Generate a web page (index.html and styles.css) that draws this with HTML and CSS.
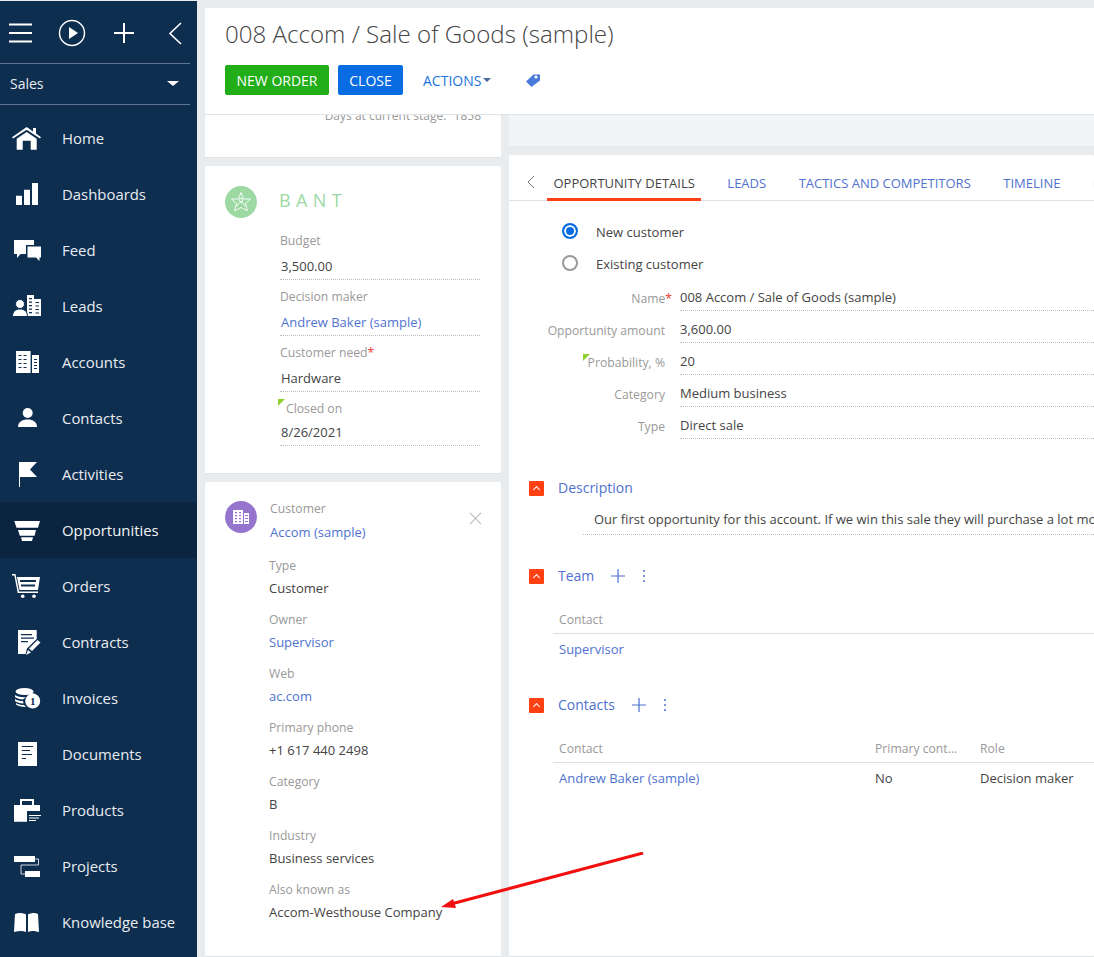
FILE: index.html
```html
<!DOCTYPE html>
<html lang="en">
<head>
    <meta charset="UTF-8">
    <title>008 Accom / Sale of Goods (sample)</title>
    <link rel="stylesheet" href="styles.css">
</head>
<body>
<div class="page">
    <aside class="sidebar">
        <div class="tools">
            <svg class="tools-icon" width="190" height="64" viewBox="0 0 190 64" fill="none" stroke="#fff">
                <path d="M9 24.5H32M9 33H32M9 41.5H32" stroke-width="2"/>
                <circle cx="72" cy="33" r="12.5" stroke-width="1.4"/>
                <path d="M69 27V39L78 33Z" fill="#fff" stroke="none"/>
                <path d="M114 33H134M124 23V43" stroke-width="2"/>
                <path d="M181 23L170 33.5L181 44" stroke-width="1.6"/>
            </svg>
        </div>
        <div class="workplace">
            <span>Sales</span>
            <i class="caret-white"></i>
        </div>
        <nav class="nav">
            <a class="nav-item">
                <svg viewBox="0 0 32 32"><path d="M15.7 4L22 8.5V5H25V10.6L30 14.3L29 15.6L15.7 6.8L2 15.6L1 14.3Z"/><path d="M5.7 15.7L15.7 9L25.7 15.7V26.7H19.7V17.7H11.7V26.7H5.7Z"/></svg>
                Home
            </a>
            <a class="nav-item">
                <svg viewBox="0 0 32 32"><path d="M5 16.7H11V26H5ZM13 10.7H19V26H13ZM21 4H27V26H21Z"/></svg>
                Dashboards
            </a>
            <a class="nav-item">
                <svg viewBox="0 0 32 32"><path d="M3 5H23V10H15V19H9.5L6 23V19H3Z"/><path d="M16.5 11.5H30V22.5H28.5V26L25 22.5H16.5Z"/></svg>
                Feed
            </a>
            <a class="nav-item">
                <svg viewBox="0 0 32 32"><path d="M16 4H23V8H30V25H16Z"/><path class="hole" d="M18 7H21V8.2H18ZM18 10.5H21V11.7H18ZM18 14H21V15.2H18ZM18 17.5H21V18.7H18ZM18 21H21V22.2H18ZM24.5 11H28V12H24.5ZM24.5 14.5H28V15.5H24.5ZM24.5 18H28V19H24.5ZM24.5 21.5H28V22.5H24.5Z"/><circle class="person" cx="9" cy="13" r="4.5"/><path class="person" d="M1.5 25.5C1.5 20 5 18 9 18C13 18 16.5 20 16.5 25.5Z"/></svg>
                Leads
            </a>
            <a class="nav-item">
                <svg viewBox="0 0 32 32"><path d="M5 4H19.6V26H5ZM21 8H28V26H21Z"/><path class="hole" d="M7.5 8H10.5V9H7.5ZM12.5 8H15.5V9H12.5ZM7.5 12H10.5V13H7.5ZM12.5 12H15.5V13H12.5ZM7.5 16H10.5V17H7.5ZM12.5 16H15.5V17H12.5ZM7.5 20H10.5V21H7.5ZM12.5 20H15.5V21H12.5ZM23 12H26V13H23ZM23 15H26V16H23ZM23 18H26V19H23ZM23 21H26V22H23Z"/></svg>
                Accounts
            </a>
            <a class="nav-item">
                <svg viewBox="0 0 32 32"><circle cx="16.7" cy="10" r="5"/><path d="M7 24C7 19 11 16.5 16.7 16.5C22 16.5 26 19 26 24Z"/></svg>
                Contacts
            </a>
            <a class="nav-item">
                <svg viewBox="0 0 32 32"><path d="M8 3H26L19 10.5L26 18H9V28H8Z"/></svg>
                Activities
            </a>
            <a class="nav-item active">
                <svg viewBox="0 0 32 32"><path d="M3.3 6H29L27 12.7H5.5ZM7 15H25L23.6 20.7H8.8ZM10 22.3H22L21 26H11Z"/></svg>
                Opportunities
            </a>
            <a class="nav-item">
                <svg viewBox="0 0 32 32"><path d="M1 3H4.5L8 20.5H27V22H6.7L3.4 4.5H1Z"/><path d="M6 6H29L27 19H8.5ZM9 9V11H25V9ZM10 13.5V15.5H24V13.5Z" fill-rule="evenodd"/><circle cx="11.7" cy="25.2" r="1.8"/><circle cx="23" cy="25.2" r="1.8"/></svg>
                Orders
            </a>
            <a class="nav-item">
                <svg viewBox="0 0 32 32"><path d="M7 3H25.7V12L16 21.5L14.5 27H7Z"/><path class="hole" d="M10 7H21V8.2H10ZM10 10.5H23V11.7H10ZM10 14H17V15.2H10Z"/><path d="M26.5 13L29.5 15.5L21 24L18 21.5ZM17 23L20 25.5L15 28Z"/></svg>
                Contracts
            </a>
            <a class="nav-item">
                <svg viewBox="0 0 32 32"><ellipse cx="13.5" cy="8.5" rx="9" ry="3.5"/><path d="M4 12C7 14 12 14.5 15 14L12 16.5C9 16.5 6 15.5 4 14ZM4 16C6 17.5 9 18 12 18L12.5 20.5C9 20.5 6 19.5 4 18ZM5 20C7 21.5 10 22 13 22L15 24C10 24 7 23 5 21.5Z"/><path d="M14 10C16 10 19 10 22.5 9.5V10.5L14 12Z"/><circle cx="21.7" cy="18" r="7.5"/><text class="coin" x="21.7" y="22">1</text></svg>
                Invoices
            </a>
            <a class="nav-item">
                <svg viewBox="0 0 32 32"><path d="M7 3H26V27H7Z"/><path class="hole" d="M10.7 7H22V8H10.7ZM10.7 11H19V12H10.7ZM10.7 15H21V16H10.7ZM10.7 19H15V20H10.7Z"/></svg>
                Documents
            </a>
            <a class="nav-item">
                <svg viewBox="0 0 32 32"><path d="M9 4H23V10H21V6H11V10H9Z"/><path d="M3 10H29V16H16V26.7H3Z"/><path d="M18 20H30V21H18ZM18 22.5H28V23.5H18ZM18 25H25V26H18Z"/></svg>
                Products
            </a>
            <a class="nav-item">
                <svg viewBox="0 0 32 32"><path d="M3 5H24V11H3ZM14 20H29V26H14Z"/><path d="M24 8H27.5V14H10V23H14" fill="none" stroke="#fff" stroke-width="0.8"/></svg>
                Projects
            </a>
            <a class="nav-item">
                <svg viewBox="0 0 32 32"><path d="M4 7C8 5.5 12 6 15 7.5V25C12 23.5 8 23.5 3 25ZM17 7.5C20 6 24 5.5 27 7L28 25C23 23.5 20 23.5 17 25Z"/></svg>
                Knowledge base
            </a>
        </nav>
    </aside>

    <main class="content">
        <header class="header">
            <h1 class="title">008 Accom / Sale of Goods (sample)</h1>
            <div class="actions">
                <button class="btn btn-green">NEW ORDER</button>
                <button class="btn btn-blue">CLOSE</button>
                <span class="actions-link">ACTIONS <i class="caret-blue"></i></span>
                <svg class="tag" width="16" height="16" viewBox="0 0 16 16"><path d="M1 9.5L8.5 2.5H15V8.5L6.5 15Z" fill="#4a7bdc"/><circle cx="11" cy="5" r="1.6" fill="#fff"/></svg>
            </div>
        </header>

        <div class="columns">
            <div class="left">
                <section class="card card-stage">
                    <div class="stage-text">Days at current stage: <span>1858</span></div>
                </section>

                <section class="card card-bant">
                    <div class="bant-head">
                        <div class="circle circle-green">
                            <svg width="22" height="22" viewBox="0 0 22 22" fill="none" stroke="#fff" stroke-width="0.9"><path d="M11 1.5L13.6 8H20.5L15.5 12.5L17.3 19.8L11 16.5L4.7 19.8L6.5 12.5L1.5 8H8.4Z"/><circle cx="11" cy="9" r="1.7"/><path d="M7.5 15C7.5 12.5 9 11.5 11 11.5C13 11.5 14.5 12.5 14.5 15"/></svg>
                        </div>
                        <span class="bant-title">BANT</span>
                    </div>
                    <div class="bant-field">
                        <label>Budget</label>
                        <div class="bant-value">3,500.00</div>
                    </div>
                    <div class="bant-field">
                        <label>Decision maker</label>
                        <div class="bant-value link">Andrew Baker (sample)</div>
                    </div>
                    <div class="bant-field">
                        <label class="req">Customer need</label>
                        <div class="bant-value">Hardware</div>
                    </div>
                    <div class="bant-field bant-last">
                        <label class="flag flag-closed">Closed on</label>
                        <div class="bant-value">8/26/2021</div>
                    </div>
                </section>

                <section class="card card-customer">
                    <div class="customer-head">
                        <div class="circle circle-purple">
                            <svg width="18" height="16" viewBox="0 0 18 16" fill="#fff"><path fill-rule="evenodd" d="M1 1H11V15H1ZM3 3V4.2H5V3ZM7 3V4.2H9V3ZM3 6V7.2H5V6ZM7 6V7.2H9V6ZM3 9V10.2H5V9ZM7 9V10.2H9V9ZM3 12V13.2H5V12ZM7 12V13.2H9V12Z"/><path fill-rule="evenodd" d="M12 4H17V15H12ZM13 6V7H16V6ZM13 9V10H16V9ZM13 12V13H16V12Z"/></svg>
                        </div>
                        <div>
                            <label>Customer</label>
                            <div class="link">Accom (sample)</div>
                        </div>
                        <svg class="close-x" width="13" height="13" viewBox="0 0 14 14" fill="none" stroke="#bbb" stroke-width="1.1"><path d="M1 1L13 13M13 1L1 13"/></svg>
                    </div>
                    <div class="info">
                        <label>Type</label>
                        <div>Customer</div>
                    </div>
                    <div class="info">
                        <label>Owner</label>
                        <div class="link">Supervisor</div>
                    </div>
                    <div class="info">
                        <label>Web</label>
                        <div class="link">ac.com</div>
                    </div>
                    <div class="info">
                        <label>Primary phone</label>
                        <div>+1 617 440 2498</div>
                    </div>
                    <div class="info">
                        <label>Category</label>
                        <div>B</div>
                    </div>
                    <div class="info">
                        <label>Industry</label>
                        <div>Business services</div>
                    </div>
                    <div class="info">
                        <label>Also known as</label>
                        <div>Accom-Westhouse Company</div>
                    </div>
                </section>
            </div>

            <div class="right">
                <div class="panel-top"></div>
                <section class="card card-details">
                    <div class="tabs">
                        <svg class="tabs-back" width="10" height="14" viewBox="0 0 10 14" fill="none" stroke="#777" stroke-width="1"><path d="M8 1L2 7L8 13"/></svg>
                        <span class="tab tab-active">OPPORTUNITY DETAILS</span>
                        <span class="tab">LEADS</span>
                        <span class="tab">TACTICS AND COMPETITORS</span>
                        <span class="tab">TIMELINE</span>
                        <span class="tab">PRODUCTS</span>
                    </div>

                    <div class="radios">
                        <div class="radio-row"><i class="radio radio-on"></i>New customer</div>
                        <div class="radio-row"><i class="radio"></i>Existing customer</div>
                    </div>

                    <div class="form">
                        <div class="form-row">
                            <label class="req">Name</label>
                            <div class="form-value">008 Accom / Sale of Goods (sample)</div>
                        </div>
                        <div class="form-row">
                            <label>Opportunity amount</label>
                            <div class="form-value">3,600.00</div>
                        </div>
                        <div class="form-row">
                            <label class="flag flag-prob">Probability, %</label>
                            <div class="form-value">20</div>
                        </div>
                        <div class="form-row">
                            <label>Category</label>
                            <div class="form-value">Medium business</div>
                        </div>
                        <div class="form-row">
                            <label>Type</label>
                            <div class="form-value">Direct sale</div>
                        </div>
                    </div>

                    <div class="group group-description">
                        <div class="group-head">
                            <i class="toggle"></i>
                            <span class="link group-title">Description</span>
                        </div>
                        <div class="description">Our first opportunity for this account. If we win this sale they will purchase a lot more</div>
                    </div>

                    <div class="group group-team">
                        <div class="group-head">
                            <i class="toggle"></i>
                            <span class="link group-title">Team</span>
                            <svg class="plus" width="14" height="14" viewBox="0 0 14 14" fill="none" stroke="#4a6fd0" stroke-width="1.2"><path d="M0 7H14M7 0V14"/></svg>
                            <i class="dots"></i>
                        </div>
                        <div class="grid-head">Contact</div>
                        <div class="grid-row link">Supervisor</div>
                    </div>

                    <div class="group group-contacts">
                        <div class="group-head">
                            <i class="toggle"></i>
                            <span class="link group-title">Contacts</span>
                            <svg class="plus" width="14" height="14" viewBox="0 0 14 14" fill="none" stroke="#4a6fd0" stroke-width="1.2"><path d="M0 7H14M7 0V14"/></svg>
                            <i class="dots"></i>
                        </div>
                        <div class="grid-head grid-cols">
                            <span>Contact</span>
                            <span>Primary cont...</span>
                            <span>Role</span>
                        </div>
                        <div class="grid-row grid-cols">
                            <span class="link">Andrew Baker (sample)</span>
                            <span>No</span>
                            <span>Decision maker</span>
                        </div>
                    </div>
                </section>
            </div>
        </div>
    </main>

    <svg class="arrow" width="210" height="60" viewBox="0 0 210 60">
        <path d="M202 1L10 52" stroke="#f10f0f" stroke-width="3" fill="none"/>
        <path d="M0 55L12 47L15 56Z" fill="#f10f0f"/>
    </svg>
</div>
</body>
</html>
```

FILE: styles.css
```css
html, body {
    margin: 0;
    padding: 0;
    height: 100%;
    overflow: hidden;
    font-family: "Open Sans", sans-serif;
    font-size: 13px;
    color: #444;
    background: #e9ecee;
}

.page {
    position: relative;
    display: flex;
    width: 1094px;
    height: 957px;
    overflow: hidden;
}

.link {
    color: #4f72cf;
}

label {
    color: #999;
    display: block;
    font-size: 12.2px;
}

/* sidebar */
.sidebar {
    width: 197px;
    flex: none;
    margin-top: 1px;
    background: #0e2e50;
    color: #e8ecf1;
}

.tools {
    height: 63px;
    width: 190px;
    border-bottom: 1px solid #5e7490;
}

.tools-icon {
    display: block;
    margin-top: -1px;
}

.workplace {
    width: 180px;
    height: 40px;
    padding: 0 0 2px 10px;
    box-sizing: content-box;
    height: 38px;
    border-bottom: 1px solid #5e7490;
    display: flex;
    align-items: center;
    justify-content: space-between;
    font-size: 14px;
}

.caret-white {
    margin-right: 11px;
    border-top: 5px solid #fff;
    border-left: 6px solid transparent;
    border-right: 6px solid transparent;
}

.nav {
    padding-top: 5px;
}

.nav-item {
    height: 56px;
    display: flex;
    align-items: center;
    font-size: 14.9px;
    color: #e8ecf1;
}

.nav-item svg {
    width: 32px;
    height: 32px;
    margin: 2px 19px 0 11px;
    fill: #fff;
}

.nav-item.active {
    background: #0b2540;
    color: #f2f4f7;
}

.nav-item .hole {
    fill: #0e2e50;
}

.nav-item .person {
    stroke: #0e2e50;
    stroke-width: 1;
}

.nav-item .coin {
    font-size: 11px;
    font-weight: 700;
    text-anchor: middle;
    fill: #0e2e50;
    font-family: "Liberation Serif", serif;
}

/* main area */
.content {
    flex: 1;
    min-width: 0;
    padding: 8px 0 0 8px;
    display: flex;
    flex-direction: column;
}

.header {
    height: 107px;
    flex: none;
    background: #fff;
    border-bottom: 1px solid #e0e3e5;
    box-sizing: border-box;
    padding: 9px 0 0 20px;
    border-radius: 2px 0 0 0;
}

.title {
    margin: 0;
    font-size: 24.12px;
    font-weight: 300;
    line-height: 34px;
    color: #444;
}

.actions {
    margin-top: 14px;
    display: flex;
    align-items: center;
}

.btn {
    height: 30px;
    border: 0;
    border-radius: 2px;
    padding: 0;
    color: #fff;
    font-family: inherit;
    font-size: 14px;
    margin-right: 9px;
}

.btn-green {
    width: 104px;
    background: #22ae18;
}

.btn-blue {
    width: 65px;
    background: #0a6ce3;
}

.actions-link {
    margin-left: 11px;
    color: #1e74dd;
    font-size: 14px;
    display: flex;
    align-items: center;
    gap: 2px;
}

.caret-blue {
    border-top: 4px solid #4a6a9c;
    border-left: 4.5px solid transparent;
    border-right: 4.5px solid transparent;
}

.tag {
    margin-left: 34px;
}

.columns {
    flex: 1;
    display: grid;
    grid-template-columns: 296px 1fr;
    gap: 8px;
    min-height: 0;
}

.left {
    display: flex;
    flex-direction: column;
    gap: 8px;
}

.card {
    background: #fff;
    border-radius: 2px;
    border-bottom: 1px solid #e0e3e5;
    box-sizing: border-box;
}

/* left cards */
.card-stage {
    height: 43px;
    overflow: hidden;
}

.stage-text {
    margin-top: -8px;
    padding-right: 20px;
    line-height: 18px;
    font-size: 12px;
    text-align: right;
    color: #999;
}

.stage-text span {
    margin-left: 4px;
}

.card-bant {
    height: 308px;
    padding-top: 20px;
}

.circle {
    width: 32px;
    height: 32px;
    border-radius: 50%;
    flex: none;
    display: flex;
    align-items: center;
    justify-content: center;
}

.circle-green {
    background: #9cd9a3;
}

.circle-purple {
    background: #9575cd;
    margin-top: 2px;
}

.bant-head {
    display: flex;
    align-items: center;
    height: 32px;
    margin: 0 0 6px 20px;
}

.bant-title {
    margin: -4px 0 0 22px;
    color: #9cd9a3;
    font-size: 18px;
    letter-spacing: 5.4px;
}

.bant-field {
    height: 56px;
    margin: 0 21px 0 75px;
    box-sizing: border-box;
    padding-top: 7px;
    border-bottom: 1px dotted #bbb;
}

.bant-field label {
    line-height: 20px;
}

.bant-value {
    margin-top: 2px;
    line-height: 26px;
    padding-left: 1px;
}

.bant-last {
    height: 54px;
}

.bant-last .bant-value {
    margin-top: 0;
}

.req::after {
    content: "*";
    color: #f03c2e;
}

.flag {
    position: relative;
}

.flag::before {
    content: "";
    position: absolute;
    border-top: 7px solid #8fd12e;
    border-right: 7px solid transparent;
}

.flag-closed {
    padding-left: 6px;
}

.flag-closed::before {
    left: -2px;
    top: 0;
}

.card-customer {
    flex: 1;
    padding-top: 17px;
}

.customer-head {
    display: flex;
    padding: 0 19px 0 20px;
    gap: 13px;
    margin-bottom: 14px;
}

.customer-head label,
.customer-head .link {
    line-height: 20px;
}

.customer-head .link {
    margin-top: 3px;
}

.close-x {
    margin: 13px 0 0 auto;
}

.info {
    margin: 0 0 10px 64px;
}

.info label {
    line-height: 20px;
}

.info div {
    line-height: 24px;
}

/* right part */
.right {
    display: flex;
    flex-direction: column;
    gap: 8px;
    min-width: 0;
}

.panel-top {
    height: 32px;
    background: #f3f4f6;
    border-bottom: 1px solid #e6e8ea;
    box-sizing: border-box;
}

.card-details {
    flex: 1;
    overflow: hidden;
}

.tabs {
    height: 46px;
    box-sizing: border-box;
    border-bottom: 1px solid #e0e0e0;
    display: flex;
    align-items: stretch;
    white-space: nowrap;
    padding-left: 17px;
    font-size: 13px;
}

.tabs-back {
    flex: none;
    align-self: center;
    margin: 8px 11px 0 0;
}

.tab {
    color: #4f72cf;
    padding: 0 6.5px;
    margin-right: 19.5px;
    line-height: 56px;
    height: 46px;
    box-sizing: border-box;
}

.tab-active {
    color: #444;
    border-bottom: 3px solid #ff4013;
}

.radios {
    padding: 14px 0 0 53px;
}

.radio-row {
    height: 30px;
    padding-top: 2px;
    display: flex;
    align-items: center;
}

.radio {
    width: 16px;
    height: 16px;
    box-sizing: border-box;
    border: 2px solid #999;
    border-radius: 50%;
    margin: -2px 18px 0 0;
    background: #fff;
}

.radio-on {
    border-color: #0a6ce3;
    background: #0a6ce3;
    box-shadow: inset 0 0 0 2px #fff;
}

.form-row {
    height: 32px;
    display: flex;
    align-items: flex-end;
}

.form-row label {
    width: 156px;
    flex: none;
    text-align: right;
    line-height: 24px;
    margin-right: 15px;
}

.form-row label.req::after {
    margin-right: -7px;
}

.form-value {
    flex: 1;
    line-height: 22px;
    padding-bottom: 2px;
    border-bottom: 1px dotted #bbb;
    white-space: nowrap;
}

.flag-prob::before {
    left: 74px;
    top: 3px;
}

.group {
    padding-left: 20px;
}

.group-description {
    margin-top: 41px;
}

.group-team {
    margin-top: 33px;
}

.group-contacts {
    margin-top: 31px;
}

.group-head {
    height: 16px;
    display: flex;
    align-items: center;
}

.toggle {
    width: 15px;
    height: 15px;
    flex: none;
    background: #ff4013;
    border-radius: 1px;
    position: relative;
    margin-right: 14px;
}

.toggle::after {
    content: "";
    position: absolute;
    left: 5px;
    top: 6px;
    width: 4px;
    height: 4px;
    border-left: 1.3px solid #fff;
    border-top: 1.3px solid #fff;
    transform: rotate(45deg);
}

.group-title {
    font-size: 14px;
    line-height: 16px;
}

.plus {
    margin-left: 17px;
}

.dots {
    width: 2px;
    height: 2px;
    border-radius: 50%;
    background: #4a6fd0;
    box-shadow: 0 -5px 0 #4a6fd0, 0 5px 0 #4a6fd0;
    margin-left: 18px;
}

.description {
    margin: 11px 0 0 54px;
    height: 28px;
    line-height: 24px;
    padding-left: 11px;
    box-sizing: border-box;
    border-bottom: 1px dotted #bbb;
    white-space: nowrap;
    overflow: hidden;
}

.grid-head {
    margin: 24px 0 0 24px;
    padding-left: 6px;
    height: 26px;
    line-height: 24px;
    box-sizing: border-box;
    border-bottom: 1px solid #ddd;
    color: #999;
    font-size: 12.2px;
}

.grid-row {
    margin-left: 24px;
    padding-left: 6px;
    height: 32px;
    line-height: 30px;
}

.grid-cols {
    display: grid;
    grid-template-columns: 316px 105px 1fr;
    white-space: nowrap;
}

/* annotation drawn over the screenshot */
.arrow {
    position: absolute;
    left: 441px;
    top: 852px;
}
```
